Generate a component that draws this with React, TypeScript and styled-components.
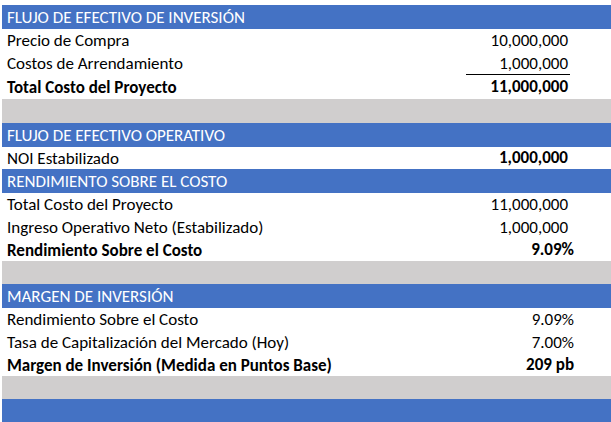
import styled, { createGlobalStyle } from "styled-components";

const Global = createGlobalStyle`
  body {
    margin: 0;
    background: #ffffff;
  }
`;

type Line = {
  label: string;
  value?: string;
  bold?: boolean;
  boldValue?: boolean;
  pct?: boolean;
  underline?: boolean;
  h?: number;
};

type Block = { title: string; lines: Line[]; gap?: number };

const blocks: Block[] = [
  {
    title: "FLUJO DE EFECTIVO DE INVERSIÓN",
    lines: [
      { label: "Precio de Compra", value: "10,000,000" },
      { label: "Costos de Arrendamiento", value: "1,000,000", underline: true },
      { label: "Total Costo del Proyecto", value: "11,000,000", bold: true, h: 24 },
    ],
    gap: 24,
  },
  {
    title: "FLUJO DE EFECTIVO OPERATIVO",
    lines: [{ label: "NOI Estabilizado", value: "1,000,000", boldValue: true, h: 22 }],
  },
  {
    title: "RENDIMIENTO SOBRE EL COSTO",
    lines: [
      { label: "Total Costo del Proyecto", value: "11,000,000" },
      { label: "Ingreso Operativo Neto (Estabilizado)", value: "1,000,000" },
      { label: "Rendimiento Sobre el Costo", value: "9.09%", bold: true, pct: true, h: 22 },
    ],
    gap: 23,
  },
  {
    title: "MARGEN DE INVERSIÓN",
    lines: [
      { label: "Rendimiento Sobre el Costo", value: "9.09%", pct: true },
      { label: "Tasa de Capitalización del Mercado (Hoy)", value: "7.00%", pct: true },
      {
        label: "Margen de Inversión (Medida en Puntos Base)",
        value: "209 pb",
        bold: true,
        pct: true,
        h: 22,
      },
    ],
    gap: 23,
  },
];

export default function App() {
  return (
    <>
      <Global />
      <Sheet>
        {blocks.map((b) => (
          <Section key={b.title}>
            <Header>{b.title}</Header>
            {b.lines.map((l, i) => (
              <Row key={i} $h={l.h ?? 23}>
                <Label $bold={l.bold}>{l.label}</Label>
                <Value
                  $bold={l.bold || l.boldValue}
                  $underline={l.underline}
                  $pct={l.pct}
                >
                  {l.value}
                </Value>
                <Spare />
              </Row>
            ))}
            {b.gap && <Gap $h={b.gap} />}
          </Section>
        ))}
        <Footer />
      </Sheet>
    </>
  );
}

const Sheet = styled.div`
  padding: 5px 0 0 2px;
  font-family: Calibri, Carlito, Lato, "Liberation Sans", sans-serif;
  font-size: 17px;
  color: #000000;
`;

const Section = styled.div`
  display: flex;
  flex-direction: column;
`;

const Header = styled.div`
  height: 24px;
  display: flex;
  align-items: center;
  padding-left: 5px;
  background: #4472c4;
  color: #ffffff;
`;

const Row = styled.div<{ $h: number }>`
  height: ${(p) => p.$h}px;
  display: flex;
  align-items: stretch;
`;

const Label = styled.div<{ $bold?: boolean }>`
  flex: 1;
  display: flex;
  align-items: center;
  padding-left: 5px;
  white-space: nowrap;
  font-weight: ${(p) => (p.$bold ? 700 : 400)};
`;

const Value = styled.div<{ $bold?: boolean; $underline?: boolean; $pct?: boolean }>`
  width: 104px;
  display: flex;
  align-items: center;
  justify-content: flex-end;
  padding-right: ${(p) => (p.$pct ? "0" : "2px")};
  margin-right: ${(p) => (p.$pct ? "-4px" : "0")};
  box-sizing: border-box;
  font-weight: ${(p) => (p.$bold ? 700 : 400)};
  border-bottom: ${(p) => (p.$underline ? "1px solid #000" : "1px solid transparent")};
`;

const Spare = styled.div`
  width: 41px;
`;

const Gap = styled.div<{ $h: number }>`
  height: ${(p) => p.$h}px;
  background: #d0cece;
`;

const Footer = styled.div`
  height: 23px;
  background: #4472c4;
`;
